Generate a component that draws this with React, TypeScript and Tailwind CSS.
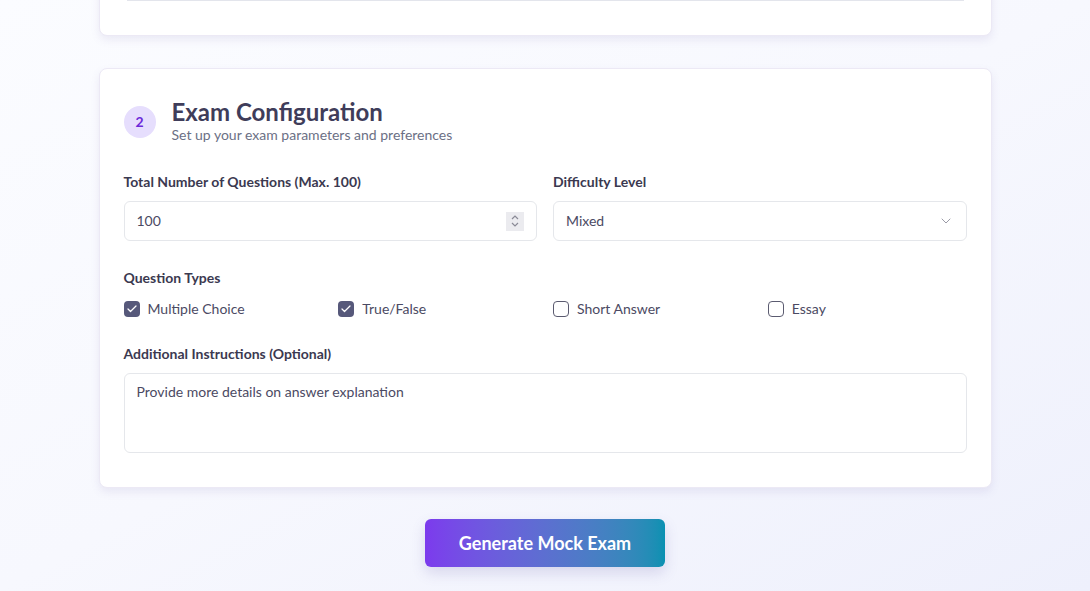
import { ChevronDown, Check } from 'lucide-react'

const types = [
  { label: 'Multiple Choice', checked: true },
  { label: 'True/False', checked: true },
  { label: 'Short Answer', checked: false },
  { label: 'Essay', checked: false },
]

function CheckBox({ checked }: { checked: boolean }) {
  if (checked) {
    return (
      <span className="flex h-4 w-4 items-center justify-center rounded-[4px] bg-[#56587a]">
        <Check className="h-3 w-3 text-white" strokeWidth={2.5} />
      </span>
    )
  }
  return <span className="h-4 w-4 rounded-[4px] border border-[#5b5b70] bg-white" />
}

export default function App() {
  return (
    <div className="min-h-screen bg-gradient-to-br from-[#fbfcff] via-[#f7f8fe] to-[#eef0fc] font-['Lato',sans-serif] text-[#3d3b56] overflow-hidden">
      <div className="mx-auto flex w-[893px] flex-col pb-6">
        {/* previous step card, scrolled mostly out of view */}
        <div className="-mt-[40px] rounded-lg border border-[#ece9f5] bg-white px-[27px] shadow-[0_4px_8px_rgba(120,110,170,0.12)]">
          <div className="h-[40px] border-b border-[#e3e5ec]" />
          <div className="h-[34px]" />
        </div>

        <div className="mt-8 rounded-lg border border-[#ece9f5] bg-white px-6 pt-[30px] pb-[34px] shadow-[0_4px_8px_rgba(120,110,170,0.12)]">
          <div className="flex items-center gap-4">
            <div className="flex h-8 w-8 items-center justify-center rounded-full bg-[#e6defd] text-sm font-bold text-[#6d28d9]">
              2
            </div>
            <div>
              <h2 className="text-2xl leading-[26px] font-bold text-[#3f3d5a]">Exam Configuration</h2>
              <p className="text-sm leading-5 text-[#6b7085]">Set up your exam parameters and preferences</p>
            </div>
          </div>

          <div className="mt-[27px] grid grid-cols-2 gap-4">
            <div>
              <label className="mb-[9px] block text-sm leading-5 font-bold text-[#3b3950]">
                Total Number of Questions (Max. 100)
              </label>
              <div className="flex h-10 items-center justify-between rounded-md border border-[#e5e7eb] bg-white pl-3 pr-3 text-sm text-[#4b4a63]">
                <span>100</span>
                <span className="flex h-[19px] w-[18px] flex-col items-center justify-center bg-[#ebebef] text-[#8a8a96]">
                  <svg width="10" height="14" viewBox="0 0 10 14" fill="none" stroke="currentColor" strokeWidth="1.2">
                    <path d="M2 5l3-3 3 3" />
                    <path d="M2 9l3 3 3-3" />
                  </svg>
                </span>
              </div>
            </div>
            <div>
              <label className="mb-[9px] block text-sm leading-5 font-bold text-[#3b3950]">Difficulty Level</label>
              <div className="flex h-10 items-center justify-between rounded-md border border-[#e5e7eb] bg-white px-3 text-sm text-[#4b4a63]">
                <span>Mixed</span>
                <ChevronDown className="h-4 w-4 text-[#9a9aa6]" strokeWidth={1.5} />
              </div>
            </div>
          </div>

          <div className="mt-[27px]">
            <label className="block text-sm leading-5 font-bold text-[#3b3950]">Question Types</label>
            <div className="mt-[11px] grid grid-cols-4 gap-4">
              {types.map((t) => (
                <div key={t.label} className="flex items-center gap-2 text-sm leading-5 text-[#4b4a63]">
                  <CheckBox checked={t.checked} />
                  <span>{t.label}</span>
                </div>
              ))}
            </div>
          </div>

          <div className="mt-[25px]">
            <label className="mb-[9px] block text-sm leading-5 font-bold text-[#3b3950]">
              Additional Instructions (Optional)
            </label>
            <div className="h-20 rounded-md border border-[#e5e7eb] bg-white px-3 py-2 text-sm leading-5 text-[#4b4a63]">
              Provide more details on answer explanation
            </div>
          </div>
        </div>

        <div className="mt-[31px] flex justify-center">
          <button className="h-12 w-60 rounded-md bg-gradient-to-r from-[#7c3aed] to-[#0891b2] text-lg font-bold text-white shadow-[0_6px_14px_rgba(90,80,160,0.18)]">
            Generate Mock Exam
          </button>
        </div>
      </div>
    </div>
  )
}
